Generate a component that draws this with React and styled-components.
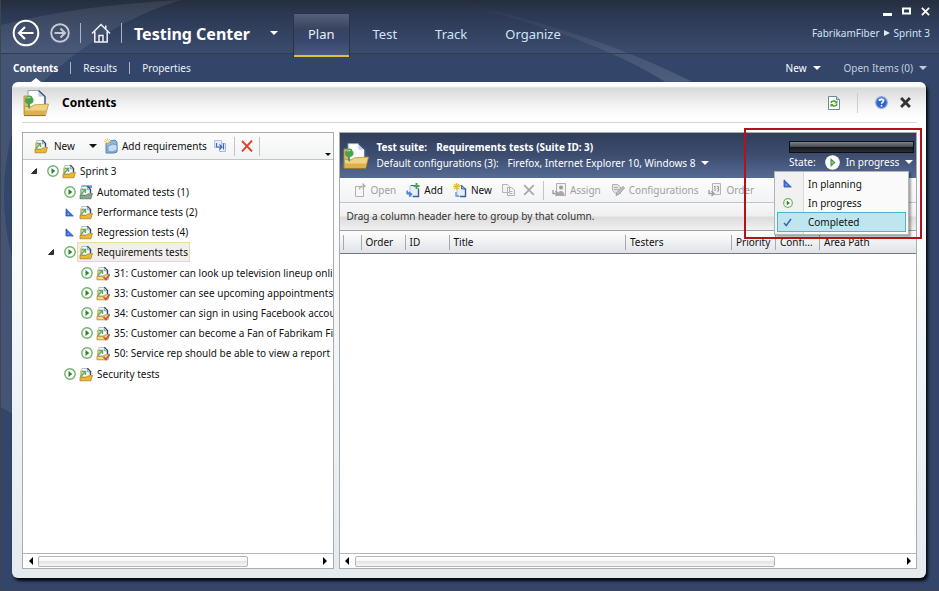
import React from "react";
import styled, { createGlobalStyle, css } from "styled-components";

const Global = createGlobalStyle`
  *, *::before, *::after { box-sizing: border-box; }
  html, body, #root { height: 100%; }
  body {
    margin: 0;
    overflow: hidden;
    background: #334669;
    color: #111;
    font-family: "Noto Sans", "Open Sans", sans-serif;
    font-size: 10px;
    line-height: 16px;
  }
  button {
    margin: 0;
    padding: 0;
    border: 0;
    background: none;
    color: inherit;
    font: inherit;
    white-space: nowrap;
    cursor: pointer;
  }
  ul { list-style: none; margin: 0; padding: 0; }
  svg { display: block; flex: none; }
`;

/* ---------- frame ---------- */

const Window = styled.div`
  position: relative;
  isolation: isolate;
  min-height: 100%;
  display: flex;
  flex-direction: column;
  border: solid #3c444f;
  border-width: 0 0 1px 1px;
`;

const Backdrop = styled.svg`
  position: absolute;
  inset: 0;
  z-index: -1;
  width: 100%;
  height: 100%;
`;

const TitleBar = styled.header`
  display: flex;
  justify-content: space-between;
  height: 54px;
  padding: 0 9px 0 11px;
  border-bottom: 1px solid #333c4a;
`;

const Brand = styled.div`
  display: flex;
  align-items: center;
  height: 40px;
  margin-top: 13px;
  color: #fff;
`;

const IconButton = styled.button`
  display: grid;
  place-items: center;
  margin-right: ${(p) => p.$gap || 0}px;
`;

const Rule = styled.span`
  width: 1px;
  height: ${(p) => p.$h || 20}px;
  margin: 0 ${(p) => p.$gap || 10}px;
  background: ${(p) => p.$color || "#a9b3c6"};
`;

const EdgeRule = styled.span`
  width: 1px;
  height: 19px;
  background: #c4c4c4;
`;

const AppTitle = styled.h1`
  margin: 0 20px 0 2px;
  padding-top: 2px;
  font-size: 16px;
  line-height: 24px;
  font-weight: 700;
  white-space: nowrap;
`;

const Tabs = styled.nav`
  display: flex;
  gap: 8px;
  margin: 3px 0 0 15px;
`;

const Tab = styled.button`
  height: 44px;
  padding: 0 15px 2px;
  font-size: 13px;
  color: #cfe3f7;
  ${(p) =>
    p.$active &&
    css`
      color: #e6effa;
      border: solid #2c3443;
      border-width: 1px 1px 0;
      padding: 0 14px 3px;
      background: linear-gradient(#55607a, #38445f 35%, #36466d 60%, #4a5b82);
      box-shadow: inset 0 -2px #e9bd3c;
    `}
`;

const TitleRight = styled.div`
  display: flex;
  flex-direction: column;
  align-items: flex-end;
`;

const WindowButtons = styled.div`
  display: flex;
  align-items: center;
  gap: 10px;
  height: 22px;
  color: #fff;
`;

const Crumbs = styled.nav`
  display: flex;
  align-items: center;
  gap: 4px;
  height: 22px;
  color: #cfe3f7;
  a { color: inherit; text-decoration: none; }
`;

const SubBar = styled.div`
  display: flex;
  justify-content: space-between;
  align-items: center;
  height: 28px;
  padding: 0 12px;
  color: #eaf1fa;
`;

const Group = styled.div`
  display: flex;
  align-items: center;
  gap: ${(p) => p.$gap || 0}px;
`;

const SubTab = styled.button`
  position: relative;
  height: 28px;
  ${(p) =>
    p.$active &&
    css`
      font-weight: 700;
      color: #fff;
      &::after {
        content: "";
        position: absolute;
        left: 50%;
        bottom: 0;
        margin-left: -5px;
        border: 5px solid transparent;
        border-top: 0;
        border-bottom: 4px solid #fff;
      }
    `}
`;

const DropButton = styled.button`
  display: flex;
  align-items: center;
  gap: ${(p) => p.$gap || 6}px;
  color: ${(p) => p.$color || "inherit"};
`;

const Caret = styled.span`
  display: block;
  border: ${(p) => p.$size || 4}px solid transparent;
  border-top-color: currentColor;
  border-bottom: 0;
`;

const Card = styled.main`
  flex: 1;
  display: flex;
  flex-direction: column;
  margin: 0 13px 12px 11px;
  padding: 0 9px 9px 10px;
  border-radius: 6px;
  background: linear-gradient(#fff 0, #fff 4px, #d9d9d9 6px, #f4f4f4 24px, #fff 36px, #fafbfc 30%, #e4eaee);
  box-shadow: 2px 3px 3px #05080f;
`;

const CardHeader = styled.div`
  display: flex;
  align-items: center;
  justify-content: space-between;
  height: 41px;
  margin-bottom: 9px;
  padding: 1px 6px 0 1px;
  border-bottom: 1px solid #d4d4d4;
`;

const CardTitle = styled.h2`
  margin: 0;
  font-size: 12px;
  line-height: 18px;
  font-weight: 700;
  color: #000;
`;

const Split = styled.div`
  flex: 1;
  display: grid;
  grid-template-columns: minmax(0, 35fr) minmax(0, 65fr);
  gap: 5px;
`;

const Pane = styled.section`
  position: relative;
  display: flex;
  flex-direction: column;
  min-width: 0;
  border: 1px solid #a9adb2;
  background: #fff;
`;

/* ---------- toolbars ---------- */

const Toolbar = styled.div`
  display: flex;
  align-items: center;
  gap: ${(p) => p.$gap}px;
  height: ${(p) => p.$h}px;
  padding: 0 ${(p) => p.$right}px 0 ${(p) => p.$left}px;
  border-bottom: 1px solid #c2c5c9;
  background: linear-gradient(#fcfcfc, #f2f3f4);
  overflow: hidden;
`;

const ToolButton = styled.button`
  display: flex;
  align-items: center;
  gap: ${(p) => p.$gap || 4}px;
  color: #111;
  &:disabled { color: #a0a0a0; cursor: default; }
`;

const Overflow = styled.button`
  align-self: flex-end;
  margin-left: auto;
  padding-bottom: 3px;
`;

/* ---------- tree ---------- */

const Tree = styled.ul`
  flex: 1;
  padding-top: 1px;
  overflow: hidden;
  ul { padding: 1px 0; }
`;

const Node = styled.div`
  display: flex;
  align-items: center;
  height: 20px;
  padding-left: ${(p) => p.$depth * 17 + 5}px;
`;

const Twisty = styled.button`
  display: grid;
  flex: none;
  place-items: center;
  width: 12px;
  height: 12px;
  margin-right: 6px;
`;

const NodeLabel = styled.button`
  display: flex;
  flex: none;
  align-items: center;
  gap: 4px;
  height: 20px;
  padding: 0 1px;
  margin-left: 1px;
  border: 1px solid transparent;
  ${(p) =>
    p.$selected &&
    css`
      border-color: #ecd9a4;
      background: #f1efec;
    `}
`;

const StateSlot = styled.span`
  display: grid;
  flex: none;
  place-items: center;
  width: 13px;
  height: 20px;
`;

/* ---------- scroll bar ---------- */

const ScrollBar = styled.div`
  display: flex;
  align-items: center;
  height: 15px;
  padding: 0 5px;
  gap: 5px;
  border-top: 1px solid #b5b8bb;
`;

const Track = styled.div`
  flex: 1;
  height: 11px;
`;

const Thumb = styled.div`
  width: ${(p) => p.$w}%;
  height: 11px;
  border: 1px solid #b4b4b4;
  border-radius: 2px;
  background: linear-gradient(#fff, #f7f7f7 45%, #e4e4e4 50%, #f6f6f6);
`;

const ScrollArrow = styled.button`
  display: grid;
  place-items: center;
  width: 5px;
  height: 12px;
  &::before {
    content: "";
    border: 4px solid transparent;
    ${(p) =>
      p.$right
        ? "border-left-color: #000; border-right: 0;"
        : "border-right-color: #000; border-left: 0;"}
  }
`;

/* ---------- suite ---------- */

const SuiteHeader = styled.div`
  display: flex;
  align-items: center;
  height: 45px;
  padding: 0 2px 0 3px;
  color: #fff;
  background: linear-gradient(#303e5a, #3d4d70 50%, #566a93);
`;

const SuiteText = styled.div`
  flex: 1;
  min-width: 0;
  margin-left: 8px;
  padding-bottom: 2px;
`;

const SuiteLine = styled.div`
  display: flex;
  align-items: center;
  gap: 9px;
  line-height: 16px;
  white-space: nowrap;
  font-weight: ${(p) => (p.$bold ? 700 : 400)};
`;

const StateBox = styled.div`
  position: relative;
  display: flex;
  flex-direction: column;
  width: 125px;
  padding-top: 1px;
`;

const Meter = styled.div`
  height: 12px;
  border: 1px solid #0c0f16;
  background: linear-gradient(#7d8289, #484c54 45%, #15171c 55%, #2a2e36);
`;

const StateLine = styled.div`
  display: flex;
  align-items: center;
  gap: 9px;
  height: 18px;
`;

const StateMenu = styled.ul`
  position: absolute;
  z-index: 2;
  top: 31px;
  right: 5px;
  width: 135px;
  padding: 2px;
  color: #111;
  border: 1px solid #b4b4b4;
  background: linear-gradient(90deg, #f1f1f1 28px, #d9d9d9 28px, #d9d9d9 29px, #fafafa 29px);
  box-shadow: 2px 2px 2px rgba(0, 0, 0, 0.35);
`;

const MenuItem = styled.button`
  display: flex;
  align-items: center;
  gap: 14px;
  width: 100%;
  height: ${(p) => (p.$active ? 20 : 19)}px;
  padding: 0 3px;
  border: 1px solid ${(p) => (p.$active ? "#4cb4cc" : "transparent")};
  background: ${(p) => (p.$active ? "#bfe5ef" : "none")};
`;

const Highlight = styled.div`
  position: absolute;
  z-index: 3;
  top: -5px;
  right: -6px;
  width: 178px;
  height: 111px;
  border: 2px solid #b01319;
  pointer-events: none;
`;

const GroupBar = styled.div`
  height: 28px;
  padding: 0 7px;
  line-height: 27px;
  color: #333;
  border-bottom: 1px solid #9a9da1;
  background: linear-gradient(#f8f8f8, #f0f0f0 46%, #dcdcdc 54%, #f1f1f1);
`;

const Grid = styled.table`
  width: 100%;
  table-layout: fixed;
  border-collapse: separate;
  border-spacing: 0;
`;

const Th = styled.th`
  width: ${(p) => (p.$w ? p.$w + "px" : "auto")};
  height: 23px;
  padding: 0 0 0 4px;
  text-align: left;
  font-weight: 400;
  white-space: nowrap;
  overflow: hidden;
  border-bottom: 1px solid #75787c;
  background:
    linear-gradient(#a6a9ad, #a6a9ad) right center / 1px 15px no-repeat,
    linear-gradient(#fdfdfd, #f0f1f3 50%, #dfe2e6);
  &:last-child {
    background: linear-gradient(#fdfdfd, #f0f1f3 50%, #dfe2e6);
  }
`;

const GridBody = styled.div`
  flex: 1;
`;

/* ---------- icons ---------- */

const BackIcon = () => (
  <svg width="28" height="28" viewBox="0 0 28 28" fill="none" stroke="#fff">
    <circle cx="14" cy="14" r="12.3" strokeWidth="2" />
    <path d="M21.5 14H7.5M13 8l-6 6 6 6" strokeWidth="2.2" />
  </svg>
);
const ForwardIcon = () => (
  <svg width="20" height="20" viewBox="0 0 20 20" fill="none" stroke="#c3cad7">
    <circle cx="10" cy="10" r="8.8" strokeWidth="1.9" />
    <path d="M4.5 10h10M10.5 5.5L15 10l-4.500 4.500" strokeWidth="2" />
  </svg>
);
const HomeIcon = () => (
  <svg width="20" height="20" viewBox="0 0 20 20" fill="none" stroke="#eef2f8" strokeWidth="1.5">
    <path d="M1 10.5L10 1.5l9 9M3.8 8.5V19h12.4V8.5M14.8 5.5V2.6M8 19v-6.500h4V19" />
  </svg>
);
const CrumbArrow = () => (
  <svg width="6" height="6" viewBox="0 0 6 6"><path d="M0 0l6 3-6 3z" fill="#dcebfa" /></svg>
);
const MinIcon = () => (
  <svg width="9" height="10" viewBox="0 0 9 10"><path d="M0 7h9v3H0z" fill="#fff" /></svg>
);
const MaxIcon = () => (
  <svg width="9" height="8" viewBox="0 0 9 8"><path d="M1 1.5h7v5H1z" fill="none" stroke="#fff" strokeWidth="2" /></svg>
);
const CloseIcon = ({ size = 9, color = "#fff", w = 2 }) => (
  <svg width={size} height={size} viewBox="0 0 10 10">
    <path d="M1 1l8 8M9 1L1 9" stroke={color} strokeWidth={w} />
  </svg>
);

const SuiteIcon = () => (
  <svg width="26" height="28" viewBox="0 0 26 28">
    <path d="M1 7h5v19H1z" fill="#dcb95f" stroke="#ab8b40" strokeWidth=".8" />
    <path d="M5 1.500h10.500l6.500 6V18H5z" fill="#f2f7fc" stroke="#8b9db3" strokeWidth=".9" />
    <path d="M7 3h8l1.500 5.500H20V16H7z" fill="#fff" />
    <path d="M15.500 1.500v6H22z" fill="#b9cfe6" />
    <path d="M15.500 1.500l6.500 6V15" fill="none" stroke="#2f4c74" strokeWidth="1.200" />
    <path d="M1.500 17.500l7 .300 3-2 14-.800-3 11.500H1.500z" fill="#f0d385" stroke="#b8953f" strokeWidth=".8" />
    <path d="M2 21.500h21l-1.200 4.500H2z" fill="#dcb04a" />
    <path d="M4 8c2-2.500 5-1.500 5.500.8 1.800 1.700 1.200 4.700-.8 5.700L7 15v5l-2-1.500V15c-3-.500-4.500-4.500-1-7z" fill="#4aa34c" />
    <path d="M4.200 9.500c1-1.500 2.500-1.500 3.300-.5" stroke="#a9e095" strokeWidth="1.200" fill="none" />
    <path d="M1 26.600h21.500" stroke="#94742b" />
  </svg>
);
const Folder = ({ kind }) => (
  <svg width="14" height="15" viewBox="0 0 14 15">
    {kind === "auto" && <path d="M2.500.300H13v2.700H2.500z" fill="#5e96e0" />}
    <path d="M1 3.500h3V13.500H1z" fill={kind === "auto" ? "#a7b9b0" : "#dfc077"} />
    <path d="M2.800 1.500H8.500L11.500 4.500V10H2.800z" fill="#f8fafd" stroke="#9aa6b6" strokeWidth=".7" />
    <path d="M8.300 1.300l3.200 3.200V8" fill="none" stroke="#2f4468" strokeWidth="1.400" />
    <path d="M8.300 1.800v3h2.800" fill="#bdd0e4" stroke="#6580a3" strokeWidth=".6" />
    <path
      d="M1 13.800V10.200l6 .300 1.500-1.500 5-.500-1.700 5.300z"
      fill={kind === "auto" ? "#86a78c" : kind === "req" ? "#f0d98b" : "#efb92f"}
      stroke={kind === "auto" ? "#50715a" : "#a57822"}
      strokeWidth=".7"
    />
    <path d="M3 4.500h3.500V8M6 5L1.800 9.500" fill="none" stroke="#62ad50" strokeWidth="1.400" />
    {kind === "req" && <path d="M7.500 10.800l2.300 2.700L13.500 8.500" fill="none" stroke="#dc4b39" strokeWidth="1.500" />}
  </svg>
);
const PlayIcon = ({ size = 12 }) => (
  <svg width={size} height={size} viewBox="0 0 12 12">
    <circle cx="6" cy="6" r="5.200" fill="#fff" stroke="#6db267" strokeWidth="1.400" />
    <path d="M4.500 3v6L8.300 6z" fill="#2c8132" />
  </svg>
);
const PlayBadge = () => (
  <svg width="15" height="15" viewBox="0 0 15 15">
    <circle cx="7.500" cy="7.500" r="7.300" fill="#fff" />
    <path d="M5.500 3v9l5-4.500z" fill="#3f9344" />
    <path d="M6.500 5.500v4L9 7.500z" fill="#90c98a" />
  </svg>
);
const PlanIcon = () => (
  <svg width="9" height="9" viewBox="0 0 9 9">
    <path d="M1 .8V8h7.300z" fill="#3f72d8" stroke="#2a55b4" strokeWidth=".8" />
    <path d="M2.800 5v1.500h1.500z" fill="#cddcf7" />
  </svg>
);
const CheckIcon = () => (
  <svg width="9" height="9" viewBox="0 0 9 9">
    <path d="M1 5l2.300 2.500L8 1" fill="none" stroke="#3467bd" strokeWidth="1.500" />
  </svg>
);
const TwistyIcon = () => (
  <svg width="6" height="6" viewBox="0 0 6 6"><path d="M5.500.5v5h-5z" fill="#333" stroke="#111" strokeWidth=".8" /></svg>
);
const RequirementIcon = () => (
  <svg width="14" height="16" viewBox="0 0 14 16">
    <path d="M2 5h4V3l5-1 2 2v10l-3 1H2z" fill="#8fb6dc" stroke="#4b7cab" strokeWidth=".9" />
    <path d="M4 8l5-2 4 1v5l-5 2-4-1z" fill="#c4dcf1" stroke="#5b8bb7" strokeWidth=".7" />
    <path d="M3.500 0v7M0 3.500h7M1 1l5 5M6 1L1 6" stroke="#e9c84a" strokeWidth=".9" />
    <circle cx="3.500" cy="3.500" r="1.200" fill="#fff3a8" />
  </svg>
);
const CopyTreeIcon = () => (
  <svg width="13" height="13" viewBox="0 0 13 13" fill="none">
    <path d="M5.500 3.500h6v8h-6z" fill="#eef2fa" stroke="#a9b7d8" />
    <path d="M.5.500h7v7h-7z" fill="#e6edfb" stroke="#b3c0de" />
    <path d="M2.500 3v4H7M5.500 4.500L8 7 5.500 9.500M9.500 3.500v6" stroke="#3f68c4" strokeWidth="1.200" />
  </svg>
);
const RedX = () => (
  <svg width="12" height="12" viewBox="0 0 12 12">
    <path d="M1 1l10 10.500M11 .500L1 11.500" stroke="#e2412e" strokeWidth="1.900" />
  </svg>
);
const RefreshIcon = () => (
  <svg width="12" height="14" viewBox="0 0 12 14" fill="none">
    <path d="M.5.5h8l3 3v10H.5z" fill="#fff" stroke="#7385a1" />
    <path d="M8.500.5v3h3" fill="#c8d5e6" stroke="#7385a1" />
    <path d="M3 7c.5-2.500 4-2.500 5-1M9 8c-.5 2.500-4 2.500-5 1" stroke="#4a9f28" strokeWidth="1.500" />
    <path d="M9.500 4v3.500H6.500zM2.500 11.500V8h3z" fill="#4a9f28" />
  </svg>
);
const HelpIcon = () => (
  <svg width="13" height="13" viewBox="0 0 13 13" fill="none">
    <circle cx="6.500" cy="6.500" r="5.800" fill="#2f65c8" stroke="#8ba8de" strokeWidth="1.200" />
    <path d="M2.500 4.500a4.500 4.500 0 0 1 8 0q-4 1.500-8 0z" fill="#7fa5e6" />
    <path d="M4.600 5c0-2.200 3.900-2.200 3.900 0 0 1.400-2 1.400-2 2.800M6.500 9v1.500" stroke="#fff" strokeWidth="1.500" />
  </svg>
);
const DocIcon = ({ kind }) => {
  if (kind === "open")
    return (
      <svg width="13" height="15" viewBox="0 0 13 15" fill="none" stroke="#b1b1b1">
        <path d="M1.500 3.500h8v10h-8z" fill="#f6f6f6" />
        <path d="M5.500 6.500c0-2.500 1.500-3.500 4.500-3.500M8.500.500L11 3 8.500 5.500" strokeWidth="1.300" />
      </svg>
    );
  return (
    <svg width="14" height="15" viewBox="0 0 14 15" fill="none">
      <path d="M4 2.500h5l3.500 3V13.500H4z" fill="#e4eefa" stroke="#b4c6da" />
      <path d="M12.500 5.500v8H7" stroke="#3c5f93" strokeWidth="1.400" />
      {kind === "add" && (
        <>
          <path d="M5 2.500h3" stroke="#3c5f93" />
          <path d="M10.500 0v6M7.500 3h6" stroke="#43a554" strokeWidth="1.900" />
          <path d="M1 7.500v3.500h3M3.500 9.500L5.800 11.200 3.500 13z" fill="#4f84cf" stroke="#4f84cf" strokeWidth="1.200" />
        </>
      )}
      {kind === "new" && (
        <>
          <path d="M8.500 2.500l4 3.500H8.500z" fill="#9fb9d6" stroke="#2d4f80" strokeWidth=".8" />
          <path d="M3.500 0v7M0 3.500h7M1 1l5 5M6 1L1 6" stroke="#edbd26" strokeWidth="1.200" />
          <path d="M3 9v4h3" stroke="#5f95da" strokeWidth="1.300" />
        </>
      )}
    </svg>
  );
};
const CopyIcon = () => (
  <svg width="13" height="12" viewBox="0 0 13 12" fill="#f3f3f3" stroke="#b3b3b3">
    <path d="M.5.500h5l2 2v6h-7zM5.500 3.500h4l3 2.500v5.500h-7zM7.500 7.500h3M7.500 9.500h3" />
  </svg>
);
const AssignIcon = () => (
  <svg width="14" height="14" viewBox="0 0 14 14" fill="none" stroke="#b0b0b0">
    <path d="M4.500.500h9v12h-9z" fill="#f1f1f1" />
    <circle cx="9" cy="4.500" r="2" fill="#9a9a9a" stroke="none" />
    <path d="M5.500 12.500c0-6 7-6 7 0z" fill="#a8a8a8" stroke="none" />
    <path d="M1 7v3.500h4M3.500 8L6 10.500 3.500 13" stroke="#9d9d9d" strokeWidth="1.400" />
  </svg>
);
const ConfigIcon = () => (
  <svg width="14" height="14" viewBox="0 0 14 14" fill="none" stroke="#b4b4b4">
    <path d="M1.500 1.500h5l3 2.500v6.500h-5l-3-3z" fill="#e2e2e2" />
    <path d="M3 4.500h4M3 6.500h5" />
    <path d="M5 12.500l1-3L12 3.500l1.500 1.500-6 6.500z" fill="#c4c4c4" stroke="#999" />
  </svg>
);
const OrderIcon = () => (
  <svg width="14" height="14" viewBox="0 0 14 14" fill="none" stroke="#b4b4b4">
    <path d="M4.500.5h8v11h-8z" fill="#f1f1f1" />
    <path d="M7 3v5M6 4l1-1M9 3.500h1.500v2H9.500h1v2.500H9" stroke="#969696" />
    <path d="M1 7v3.500h4M3.500 8L6 10.500 3.500 13" stroke="#9d9d9d" strokeWidth="1.400" />
  </svg>
);

/* ---------- data ---------- */

const tree = {
  label: "Sprint 3",
  state: "play",
  children: [
    { label: "Automated tests (1)", state: "play", kind: "auto" },
    { label: "Performance tests (2)", state: "plan" },
    { label: "Regression tests (4)", state: "plan" },
    {
      label: "Requirements tests",
      state: "play",
      selected: true,
      children: [
        "31: Customer can look up television lineup onli",
        "33: Customer can see upcoming appointments",
        "34: Customer can sign in using Facebook accou",
        "35: Customer can become a Fan of Fabrikam Fi",
        "50: Service rep should be able to view a report o",
      ].map((label) => ({ label, state: "play", kind: "req" })),
    },
    { label: "Security tests", state: "play" },
  ],
};

const columns = [
  ["", 4], ["", 18], ["Order", 44], ["ID", 44], ["Title", 0], ["Testers", 106],
  ["Priority", 44], ["Confi...", 44], ["Area Path", 96],
];

const TreeNode = ({ node, depth = 0 }) => (
  <li>
    <Node $depth={depth}>
      {node.children ? (
        <Twisty aria-label="Collapse"><TwistyIcon /></Twisty>
      ) : (
        <Twisty as="span" />
      )}
      <StateSlot>{node.state === "play" ? <PlayIcon /> : <PlanIcon />}</StateSlot>
      <NodeLabel $selected={node.selected}>
        <Folder kind={node.kind} />
        {node.label}
      </NodeLabel>
    </Node>
    {node.children && (
      <ul>
        {node.children.map((c) => <TreeNode key={c.label} node={c} depth={depth + 1} />)}
      </ul>
    )}
  </li>
);

const HScroll = ({ thumb }) => (
  <ScrollBar>
    <ScrollArrow aria-label="Scroll left" />
    <Track><Thumb $w={thumb} /></Track>
    <ScrollArrow $right aria-label="Scroll right" />
  </ScrollBar>
);

export default function App() {
  return (
    <>
      <Global />
      <Window>
        <Backdrop viewBox="0 0 939 591" preserveAspectRatio="none" aria-hidden="true">
          <defs>
            <linearGradient id="top" x1="0" y1="0" x2="0" y2="1">
              <stop offset="0" stopColor="#252e3e" />
              <stop offset=".25" stopColor="#2c3852" />
              <stop offset="1" stopColor="#3b4c70" />
            </linearGradient>
            <linearGradient id="ray" x1="0" y1="0" x2="0" y2="1">
              <stop offset="0" stopColor="#fff" stopOpacity="0" />
              <stop offset="1" stopColor="#fff" stopOpacity=".13" />
            </linearGradient>
          </defs>
          <path d="M0 0h939v591H0z" fill="#334669" />
          <path d="M0 0h939v54H0z" fill="url(#top)" />
          <path d="M0 25Q80 5 180 0Q100 25 40 84L12 130Q-6 195 12 262V415L0 408z" fill="#fff" opacity=".08" />
          <path d="M445 0Q590 30 692 82H665Q590 35 445 0z" fill="url(#ray)" />
        </Backdrop>

        <TitleBar>
          <Brand>
            <IconButton $gap={10} aria-label="Back"><BackIcon /></IconButton>
            <IconButton aria-label="Forward"><ForwardIcon /></IconButton>
            <Rule />
            <IconButton aria-label="Home"><HomeIcon /></IconButton>
            <Rule />
            <AppTitle>Testing Center</AppTitle>
            <IconButton aria-label="Switch center"><Caret /></IconButton>
            <Tabs>
              <Tab $active>Plan</Tab>
              <Tab>Test</Tab>
              <Tab>Track</Tab>
              <Tab>Organize</Tab>
            </Tabs>
          </Brand>
          <TitleRight>
            <WindowButtons>
              <IconButton aria-label="Minimize"><MinIcon /></IconButton>
              <IconButton aria-label="Maximize"><MaxIcon /></IconButton>
              <IconButton aria-label="Close window"><CloseIcon /></IconButton>
            </WindowButtons>
            <Crumbs>
              <a href="#project">FabrikamFiber</a>
              <CrumbArrow />
              <a href="#plan">Sprint 3</a>
            </Crumbs>
          </TitleRight>
        </TitleBar>

        <SubBar>
          <Group>
            <SubTab $active>Contents</SubTab>
            <Rule $h={12} $gap={12} />
            <SubTab>Results</SubTab>
            <Rule $h={12} $gap={12} />
            <SubTab>Properties</SubTab>
          </Group>
          <Group $gap={23}>
            <DropButton $color="#fff">New <Caret /></DropButton>
            <DropButton $color="#c3cbda">Open Items (0) <Caret /></DropButton>
          </Group>
        </SubBar>

        <Card>
          <CardHeader>
            <Group $gap={13}>
              <SuiteIcon />
              <CardTitle>Contents</CardTitle>
            </Group>
            <Group>
              <IconButton aria-label="Refresh"><RefreshIcon /></IconButton>
              <Rule $gap={17} $color="#cfcfcf" />
              <IconButton $gap={12} aria-label="Help"><HelpIcon /></IconButton>
              <IconButton aria-label="Close"><CloseIcon size={11} color="#333" w={2.6} /></IconButton>
            </Group>
          </CardHeader>

          <Split>
            <Pane aria-label="Test plan contents">
              <Toolbar $h={27} $gap={7} $left={11} $right={2}>
                <Group $gap={14}>
                  <ToolButton $gap={6}><Folder />New</ToolButton>
                  <IconButton aria-label="New options"><Caret /></IconButton>
                </Group>
                <ToolButton><RequirementIcon />Add requirements</ToolButton>
                <IconButton aria-label="Copy suite"><CopyTreeIcon /></IconButton>
                <Group $gap={6}>
                  <EdgeRule />
                  <IconButton aria-label="Delete"><RedX /></IconButton>
                  <EdgeRule />
                </Group>
                <Overflow aria-label="More tools"><Caret $size={3} /></Overflow>
              </Toolbar>
              <Tree><TreeNode node={tree} /></Tree>
              <HScroll thumb={75} />
            </Pane>

            <Pane aria-label="Test suite">
              <SuiteHeader>
                <SuiteIcon />
                <SuiteText>
                  <SuiteLine $bold><span>Test suite:</span><span>Requirements tests (Suite ID: 3)</span></SuiteLine>
                  <SuiteLine>
                    <span>Default configurations (3):</span>
                    <DropButton>Firefox, Internet Explorer 10, Windows 8 <Caret /></DropButton>
                  </SuiteLine>
                </SuiteText>
                <StateBox>
                  <Meter />
                  <StateLine>
                    <span id="state-label">State:</span>
                    <DropButton aria-haspopup="menu" aria-expanded="true" aria-describedby="state-label">
                      <PlayBadge />In progress <Caret />
                    </DropButton>
                  </StateLine>
                  <StateMenu role="menu">
                    <li role="none"><MenuItem role="menuitem"><StateSlot><PlanIcon /></StateSlot>In planning</MenuItem></li>
                    <li role="none"><MenuItem role="menuitem"><StateSlot><PlayIcon size={10} /></StateSlot>In progress</MenuItem></li>
                    <li role="none"><MenuItem role="menuitem" $active><StateSlot><CheckIcon /></StateSlot>Completed</MenuItem></li>
                  </StateMenu>
                </StateBox>
              </SuiteHeader>
              <Toolbar $h={25} $gap={10} $left={14} $right={4}>
                <ToolButton disabled><DocIcon kind="open" />Open</ToolButton>
                <ToolButton><DocIcon kind="add" />Add</ToolButton>
                <ToolButton><DocIcon kind="new" />New</ToolButton>
                <Group $gap={8}>
                  <ToolButton disabled aria-label="Copy"><CopyIcon /></ToolButton>
                  <ToolButton disabled aria-label="Remove"><CloseIcon size={12} color="#a8a8a8" w={1.4} /></ToolButton>
                  <EdgeRule />
                  <ToolButton disabled><AssignIcon />Assign</ToolButton>
                </Group>
                <ToolButton disabled><ConfigIcon />Configurations</ToolButton>
                <ToolButton disabled><OrderIcon />Order</ToolButton>
              </Toolbar>
              <GroupBar>Drag a column header here to group by that column.</GroupBar>
              <Grid>
                <thead>
                  <tr>
                    {columns.map(([name, w], i) => <Th key={i} $w={w} scope="col">{name}</Th>)}
                  </tr>
                </thead>
              </Grid>
              <GridBody />
              <HScroll thumb={77} />
              <Highlight />
            </Pane>
          </Split>
        </Card>
      </Window>
    </>
  );
}
